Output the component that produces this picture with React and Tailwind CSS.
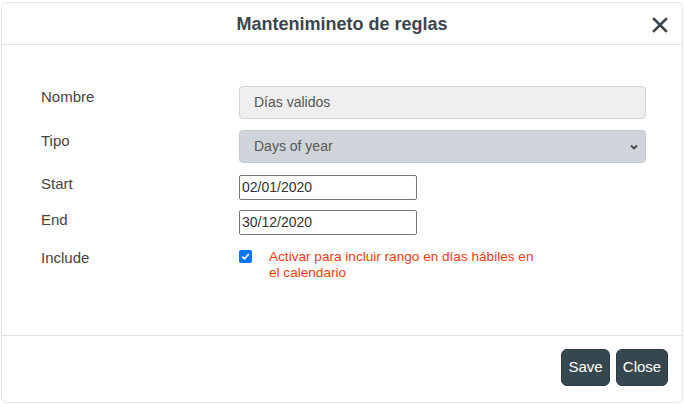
import React from 'react'

const font = { fontFamily: '"Liberation Sans", Arial, sans-serif' }

function Label({ children, pad = 'pt-[2px]' }) {
  return <div className={`w-[198px] shrink-0 text-[15px] leading-[17px] text-[#444] ${pad}`}>{children}</div>
}

export default function App() {
  return (
    <div className="w-[684px] h-[404px] bg-white pt-[2px] pl-[1px]" style={font}>
      <div className="w-[682px] h-[401px] border border-[#e3e6e9] rounded-[6px] flex flex-col">
        <div className="h-[42px] shrink-0 border-b border-[#dee2e6] flex items-center justify-center relative">
          <div className="text-[18px] font-bold text-[#3b464e] mt-[2px]">Mantenimineto de reglas</div>
          <svg className="absolute right-[14px] top-[14px]" width="16" height="16" viewBox="0 0 16 16">
            <path d="M2 2 L14 14 M14 2 L2 14" stroke="#3b464e" strokeWidth="2.6" strokeLinecap="square" />
          </svg>
        </div>

        <div className="h-[291px] shrink-0 border-b border-[#dee2e6] pl-[39px] pt-[41px]">
          <div className="flex">
            <Label>Nombre</Label>
            <div className="w-[407px] h-[33px] bg-[#efefef] border border-[#cfd4d9] rounded-[4px] flex items-center pl-[14px] text-[14px] text-[#555]">Días validos</div>
          </div>
          <div className="flex mt-[11px]">
            <Label>Tipo</Label>
            <div className="w-[407px] h-[33px] bg-[#cfd5db] border border-[#c3cad0] rounded-[4px] flex items-center justify-between pl-[14px] pr-[6px] text-[14px] text-[#555]">
              <span>Days of year</span>
              <svg width="10" height="10" viewBox="0 0 10 10">
                <path d="M2 3.5 L5 6.5 L8 3.5" fill="none" stroke="#444" strokeWidth="1.8" />
              </svg>
            </div>
          </div>
          <div className="flex mt-[12px]">
            <Label pad="pt-[0px]">Start</Label>
            <div className="w-[178px] h-[25px] border border-[#767676] rounded-[2px] flex items-center pl-[2px] text-[14px] text-[#333]">02/01/2020</div>
          </div>
          <div className="flex mt-[10px]">
            <Label pad="pt-[1px]">End</Label>
            <div className="w-[178px] h-[25px] border border-[#767676] rounded-[2px] flex items-center pl-[2px] text-[14px] text-[#333]">30/12/2020</div>
          </div>
          <div className="flex mt-[14px]">
            <Label pad="pt-[0px]">Include</Label>
            <div className="flex">
              <div className="w-[13px] h-[13px] mt-[1px] rounded-[2px] bg-[#0075ff] flex items-center justify-center shrink-0">
                <svg width="11" height="11" viewBox="0 0 11 11">
                  <path d="M2.2 5.6 L4.5 7.8 L8.8 3" fill="none" stroke="white" strokeWidth="1.8" />
                </svg>
              </div>
              <div className="ml-[17px] w-[270px] text-[13.6px] leading-[16px] text-[#f53d0f]">Activar para incluir rango en días hábiles en el calendario</div>
            </div>
          </div>
        </div>

        <div className="flex justify-end gap-[6px] pr-[14px] pt-[13px]">
          <button className="w-[49px] h-[37px] rounded-[6px] bg-[#37474f] border border-[#2c3a41] text-white text-[15px]">Save</button>
          <button className="w-[52px] h-[37px] rounded-[6px] bg-[#37474f] border border-[#2c3a41] text-white text-[15px]">Close</button>
        </div>
      </div>
    </div>
  )
}
